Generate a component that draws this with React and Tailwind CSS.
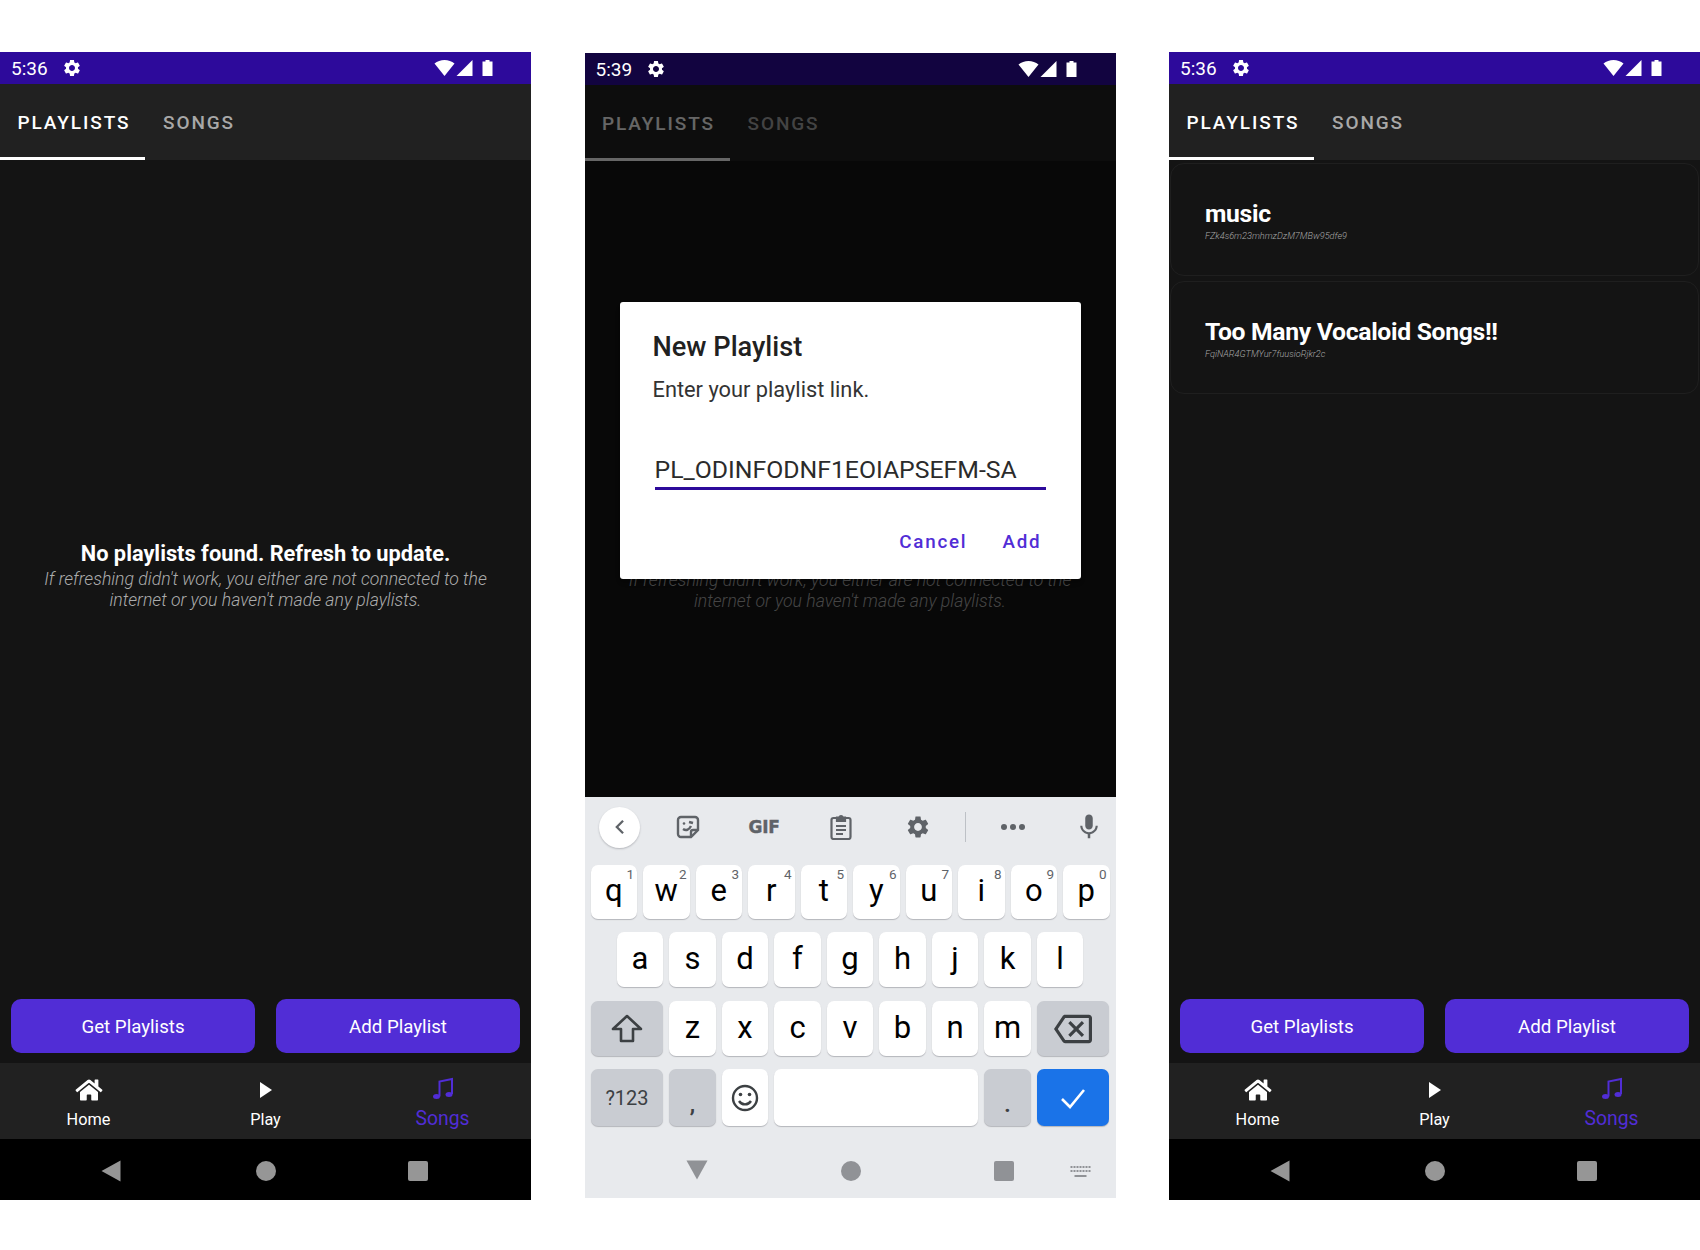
import React from "react";
import { FaHome } from "react-icons/fa";
import { MdMic, MdOutlineBackspace } from "react-icons/md";

const GEAR = "M19.14 12.94c.04-.3.06-.61.06-.94 0-.32-.02-.64-.07-.94l2.03-1.58c.18-.14.23-.41.12-.61l-1.92-3.32c-.12-.22-.37-.29-.59-.22l-2.39.96c-.5-.38-1.03-.7-1.62-.94l-.36-2.54c-.04-.24-.24-.41-.48-.41h-3.84c-.24 0-.43.17-.47.41l-.36 2.54c-.59.24-1.13.57-1.62.94l-2.39-.96c-.22-.08-.47 0-.59.22L2.74 8.87c-.12.21-.08.47.12.61l2.03 1.58c-.05.3-.09.63-.09.94s.02.64.07.94l-2.03 1.58c-.18.14-.23.41-.12.61l1.92 3.32c.12.22.37.29.59.22l2.39-.96c.5.38 1.03.7 1.62.94l.36 2.54c.05.24.24.41.48.41h3.84c.24 0 .44-.17.47-.41l.36-2.54c.59-.24 1.13-.56 1.62-.94l2.39.96c.22.08.47 0 .59-.22l1.92-3.32c.12-.22.07-.47-.12-.61l-2.01-1.58zM12 15.6c-1.98 0-3.6-1.62-3.6-3.6s1.62-3.6 3.6-3.6 3.6 1.62 3.6 3.6-1.62 3.6-3.6 3.6z";

function Gear({ className }) {
  return <svg viewBox="0 0 24 24" className={className} fill="currentColor"><path d={GEAR} /></svg>;
}

function StatusBar({ time, dim }) {
  return (
    <div className={`h-[32px] flex items-center text-white shrink-0 ${dim ? "bg-[#120440]" : "bg-[#2d0a9b]"}`}>
      <span className="ml-[11px] text-[19px] leading-none">{time}</span>
      <Gear className="ml-[14px] w-[20px] h-[20px]" />
      <svg viewBox="0 0 20 16" className="ml-[352px] w-[21px] h-[16px]" fill="currentColor"><path d="M0 3.5C2.8 1.2 6.2 0 10 0s7.2 1.2 10 3.5L10 16z" /></svg>
      <svg viewBox="0 0 16 16" className="ml-[1px] w-[17px] h-[16px]" fill="currentColor"><path d="M0 16L16 0v16z" /></svg>
      <svg viewBox="0 0 10 16" className="ml-[9px] w-[11px] h-[16px]" fill="currentColor"><path d="M3 0h4v1.500h3V16H0V1.500h3z" /></svg>
    </div>
  );
}

function Tabs() {
  return (
    <div className="h-[76px] bg-[#212121] flex shrink-0 text-[19px] font-medium tracking-[1.9px]">
      <div className="w-[145px] pl-[17.500px] pt-[6px] border-b-[3px] border-white text-white flex items-center">PLAYLISTS</div>
      <div className="pl-[18px] pt-[6px] border-b-[3px] border-transparent text-[#a8a8a8] flex items-center">SONGS</div>
    </div>
  );
}

function Empty() {
  return (
    <div className="pt-[381px] text-center">
      <div className="text-white font-bold text-[21.800px] leading-[26px]">No playlists found. Refresh to update.</div>
      <div className="text-[#acacac] italic font-light text-[17.650px] leading-[20.500px] mt-[2px]">
        If refreshing didn't work, you either are not connected to the
        <br />
        internet or you haven't made any playlists.
      </div>
    </div>
  );
}

function Buttons() {
  return (
    <div className="flex justify-between px-[11px] pb-[10px] shrink-0">
      {["Get Playlists", "Add Playlist"].map((t) => (
        <div key={t} className="w-[244px] h-[54px] pt-[2px] rounded-[10px] bg-[#512dd6] text-white text-[18.700px] flex items-center justify-center">{t}</div>
      ))}
    </div>
  );
}

function NavBar() {
  return (
    <div className="h-[76px] bg-[#212121] grid grid-cols-3 shrink-0 text-center">
      <div className="flex flex-col items-center text-white pt-[15px]">
        <FaHome className="w-[28px] h-[24px]" />
        <span className="text-[16.300px] leading-[20px] mt-[8px]">Home</span>
      </div>
      <div className="flex flex-col items-center text-white pt-[15px]">
        <svg viewBox="0 0 14 18" className="w-[14px] h-[24px] " fill="currentColor"><path d="M1 1l12 8-12 8z" /></svg>
        <span className="text-[16.300px] leading-[20px] mt-[8px]">Play</span>
      </div>
      <div className="flex flex-col items-center text-[#512dd6] pt-[14px]">
        <svg viewBox="0 0 22 24" className="w-[22px] h-[24px]" fill="none" stroke="currentColor" strokeWidth="2">
          <path d="M7.500 19.500V4.500L20 2v15" />
          <ellipse cx="4.500" cy="19.500" rx="3.500" ry="2.500" fill="currentColor" stroke="none" />
          <ellipse cx="17" cy="17.500" rx="3.500" ry="2.500" fill="currentColor" stroke="none" />
        </svg>
        <span className="text-[19.300px] leading-[24px] mt-[6px]">Songs</span>
      </div>
    </div>
  );
}

function SysBar() {
  return (
    <div className="h-[61px] bg-black flex items-center pl-[101px] shrink-0 pt-[2px]">
      <svg viewBox="0 0 20 22" className="w-[20px] h-[22px]" fill="#969696"><path d="M19.500 0.500v21L0.500 11z" /></svg>
      <div className="ml-[134.500px] w-[20px] h-[20px] rounded-full bg-[#969696]" />
      <div className="ml-[132.500px] w-[20px] h-[20px] rounded-[2px] bg-[#969696]" />
    </div>
  );
}

function Key({ children, sup, className = "bg-white text-black", width = "w-[46.500px]" }) {
  return (
    <div className={`${width} relative h-full rounded-[7px] shadow-[0_1px_1px_#b4b6bb] flex items-center justify-center shrink-0 ${className}`}>
      {children}
      {sup && <span className="absolute top-[1px] right-[3px] text-[13.500px] leading-[16px] text-[#5f6368]">{sup}</span>}
    </div>
  );
}

function Letter({ ch, sup }) {
  return <Key sup={sup}><span className="text-[31px] leading-none -mt-[3px]">{ch}</span></Key>;
}

function Keyboard() {
  const top = "qwertyuiop".split("");
  const sups = "1234567890".split("");
  return (
    <div className="h-[401px] bg-[#e8eaed] relative shrink-0">
      <div className="h-[68px] pb-[8px] flex items-center text-[#5f6368] pl-[14px]">
        <div className="w-[41px] h-[41px] rounded-full bg-white shadow-[0_1px_2px_#b4b6bb] flex items-center justify-center">
          <svg viewBox="0 0 12 18" className="w-[11px] h-[16px]" fill="none" stroke="currentColor" strokeWidth="2.600"><path d="M10 2L3 9l7 7" /></svg>
        </div>
        <svg viewBox="0 0 24 24" className="ml-[36px] w-[24px] h-[24px]" fill="none" stroke="currentColor" strokeWidth="2.400">
          <path d="M15 22H5a3 3 0 0 1-3-3V5a3 3 0 0 1 3-3h14a3 3 0 0 1 3 3v10z" />
          <path d="M22 15h-5a2 2 0 0 0-2 2v5" />
          <path d="M7 14c3 2 6 1 8-3" />
          <circle cx="8" cy="8.500" r="1.300" fill="currentColor" stroke="none" />
          <path d="M13 7l4 1" />
        </svg>
        <span className="ml-[49px] w-[33px] text-[17px] leading-none font-black font-['DejaVu_Sans'] tracking-[-0.3px] [-webkit-text-stroke:0.4px_#5f6368]">GIF</span>
        <svg viewBox="0 0 24 26" className="ml-[47px] w-[24px] h-[26px]" fill="none" stroke="currentColor" strokeWidth="2.200">
          <rect x="2.500" y="4" width="19" height="21" rx="2" />
          <path d="M8 3.500h2.500a1.500 1.500 0 0 1 3 0H16v3.500H8z" fill="currentColor" />
          <path d="M7 12h10M7 16h10M7 20h7" />
        </svg>
        <Gear className="ml-[52px] w-[26px] h-[26px]" />
        <div className="ml-[34px] w-[1px] h-[30px] bg-[#bdc1c6]" />
        <div className="ml-[35px] w-[24px] flex justify-between">
          <span className="w-[6px] h-[6px] rounded-full bg-current" />
          <span className="w-[6px] h-[6px] rounded-full bg-current" />
          <span className="w-[6px] h-[6px] rounded-full bg-current" />
        </div>
        <MdMic className="ml-[49px] w-[30px] h-[30px]" />
      </div>
      <div className="h-[54px] flex justify-center gap-[6px]">
        {top.map((c, i) => <Letter key={c} ch={c} sup={sups[i]} />)}
      </div>
      <div className="h-[55px] mt-[13px] flex justify-center gap-[6px]">
        {"asdfghjkl".split("").map((c) => <Letter key={c} ch={c} />)}
      </div>
      <div className="h-[55px] mt-[14px] flex justify-center gap-[6px]">
        <Key className="bg-[#c9ccd2] text-[#3c4043]" width="w-[72.500px]">
          <svg viewBox="0 0 32 32" className="w-[32px] h-[32px]" fill="none" stroke="currentColor" strokeWidth="2.600" strokeLinejoin="round"><path d="M16 3L2 16h8v12h12V16h8z" /></svg>
        </Key>
        {"zxcvbnm".split("").map((c) => <Letter key={c} ch={c} />)}
        <Key className="bg-[#c9ccd2] text-[#3c4043]" width="w-[72.500px]">
          <MdOutlineBackspace className="w-[38px] h-[38px]" />
        </Key>
      </div>
      <div className="h-[57px] mt-[13px] flex justify-center gap-[6px]">
        <Key className="bg-[#c9ccd2] text-[#3c4043]" width="w-[72.500px]"><span className="text-[20px]">?123</span></Key>
        <Key className="bg-[#c9ccd2] text-[#3c4043]"><span className="text-[22px] font-bold mt-[14px]">,</span></Key>
        <Key className="bg-white text-[#3c4043]">
          <svg viewBox="0 0 28 28" className="w-[28px] h-[28px]" fill="none" stroke="currentColor" strokeWidth="2.400">
            <circle cx="14" cy="14" r="12" />
            <path d="M8 17c3 4.500 9 4.500 12 0" />
            <circle cx="9.500" cy="10.500" r="1.800" fill="currentColor" stroke="none" />
            <circle cx="18.500" cy="10.500" r="1.800" fill="currentColor" stroke="none" />
          </svg>
        </Key>
        <Key width="w-[204px]" />
        <Key className="bg-[#c9ccd2] text-[#3c4043]"><span className="text-[22px] font-bold mt-[14px]">.</span></Key>
        <Key className="bg-[#1a73e8] text-white" width="w-[72.500px]">
          <svg viewBox="0 0 28 28" className="w-[28px] h-[28px]" fill="none" stroke="currentColor" strokeWidth="2.600"><path d="M3 15l8 8L25 6" /></svg>
        </Key>
      </div>
      <div className="h-[72px] pt-[18px] flex items-center justify-center gap-[133px] text-[#909296]">
        <svg viewBox="0 0 22 20" className="w-[22px] h-[20px] -mt-[2px]" fill="currentColor"><path d="M0.500 0.500h21L11 19.500z" /></svg>
        <div className="w-[20px] h-[20px] rounded-full bg-current" />
        <div className="w-[20px] h-[20px] rounded-[2px] bg-current" />
      </div>
      <svg viewBox="0 0 20 12" className="absolute right-[25px] bottom-[20px] w-[21px] h-[12px] text-[#909296]" fill="currentColor">
        <path d="M0 0h2v2H0zM3 0h2v2H3zM6 0h2v2H6zM9 0h2v2H9zM12 0h2v2h-2zM15 0h2v2h-2zM18 0h2v2h-2zM0 4h2v2H0zM3 4h2v2H3zM6 4h2v2H6zM9 4h2v2H9zM12 4h2v2h-2zM15 4h2v2h-2zM18 4h2v2h-2zM4 9h12v2H4z" />
      </svg>
    </div>
  );
}

function Dialog() {
  return (
    <div className="absolute inset-x-0 top-[32px] h-[712px] bg-black/60">
      <div className="mt-[217px] mx-[35px] h-[277px] bg-white rounded-[3px] pl-[33px] pr-[35px] pt-[29px] relative shadow-md">
        <div className="text-[#212121] text-[27.200px] leading-[32px] font-medium">New Playlist</div>
        <div className="text-[#333333] text-[21.800px] leading-[26px] mt-[14px]">Enter your playlist link.</div>
        <div className="mt-[51px] ml-[2px] border-b-[3px] border-[#2d0a9b] text-[#2b2b2b] text-[24.800px] leading-[32px] pb-[1px]">PL_ODINFODNF1EOIAPSEFM-SA</div>
        <div className="flex justify-end gap-[35px] mt-[40px] pr-[4px] text-[#512dd6] text-[18.800px] leading-[24px] font-medium tracking-[1.800px]">
          <span>Cancel</span>
          <span>Add</span>
        </div>
      </div>
    </div>
  );
}

function Card({ title, id }) {
  return (
    <div className="h-[113px] mx-[1px] rounded-[14px] border border-[#1f1f1f] pl-[34px] pt-[34px]">
      <div className="text-white font-bold text-[24.700px] leading-[32px] tracking-[-0.3px]">{title}</div>
      <div className="text-[#a8a8a8] italic font-light text-[9.200px] leading-[12px]">{id}</div>
    </div>
  );
}

function Phone({ children, className = "h-[1148px]" }) {
  return <div className={`w-[531px] flex flex-col bg-[#141414] relative overflow-hidden ${className}`}>{children}</div>;
}

export default function App() {
  return (
    <div className="w-[1700px] h-[1250px] bg-white pt-[52px] flex justify-between font-['Roboto',sans-serif]">
      <Phone>
        <StatusBar time="5:36" />
        <Tabs />
        <div className="flex-1"><Empty /></div>
        <Buttons />
        <NavBar />
        <SysBar />
      </Phone>
      <Phone className="h-[1145px] mt-[1px]">
        <StatusBar time="5:39" dim />
        <Tabs />
        <div className="flex-1 overflow-hidden"><Empty /></div>
        <Keyboard />
        <Dialog />
      </Phone>
      <Phone>
        <StatusBar time="5:36" />
        <Tabs />
        <div className="flex-1 flex flex-col gap-[5px] pt-[3px]">
          <Card title="music" id="FZk4s6m23mhmzDzM7MBw95dfe9" />
          <Card title="Too Many Vocaloid Songs!!" id="FqiNAR4GTMYur7fuusioRjkr2c" />
        </div>
        <Buttons />
        <NavBar />
        <SysBar />
      </Phone>
    </div>
  );
}
